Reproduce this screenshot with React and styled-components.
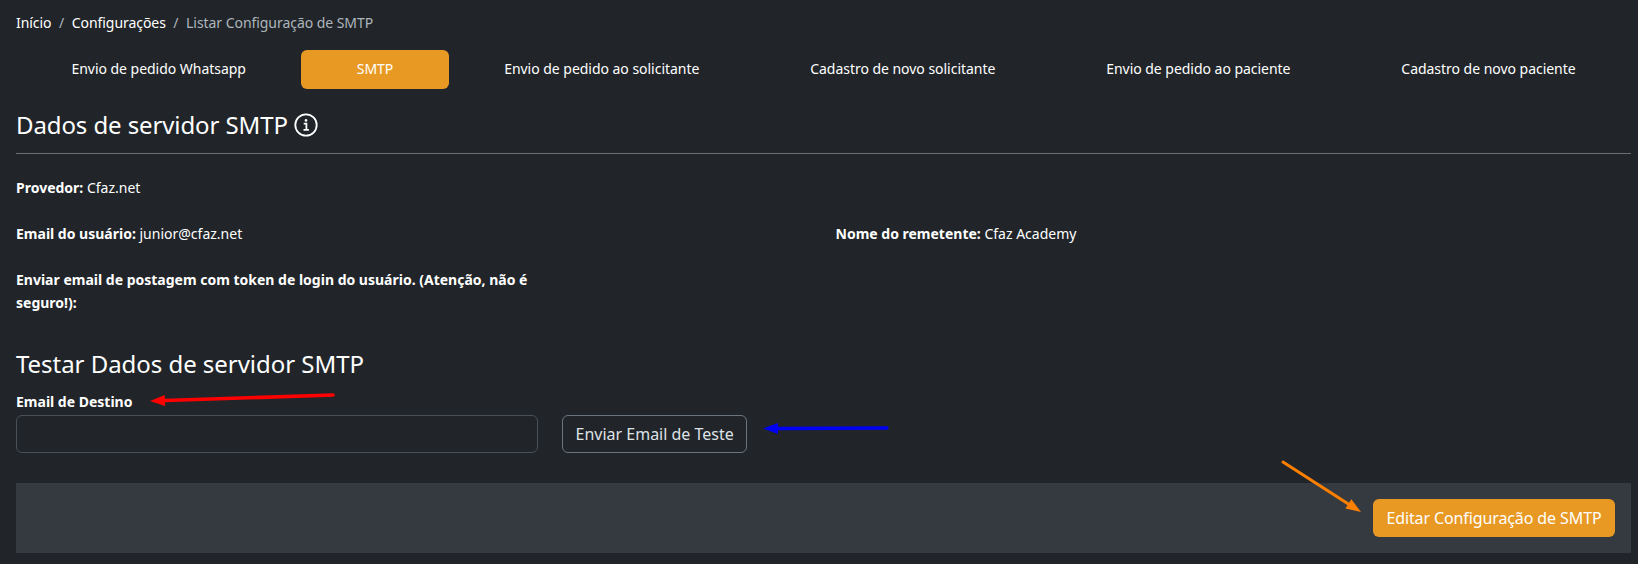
import React from 'react'
import styled, { createGlobalStyle } from 'styled-components'

const GlobalStyle = createGlobalStyle`
    * { box-sizing: border-box; }
    html, body { margin: 0; background: #212529; }
    body {
        font-family: 'Noto Sans', 'Open Sans', sans-serif;
        font-size: 14px;
        line-height: 21px;
        color: #fff;
    }
`

const tabs = [
    'Envio de pedido Whatsapp',
    'SMTP',
    'Envio de pedido ao solicitante',
    'Cadastro de novo solicitante',
    'Envio de pedido ao paciente',
    'Cadastro de novo paciente',
]

export default function App(){
    return(
        <Page>
            <GlobalStyle/>
            <Breadcrumb>
                <Crumb>Início</Crumb>
                <Slash>/</Slash>
                <Crumb>Configurações</Crumb>
                <Slash>/</Slash>
                <Crumb $current>Listar Configuração de SMTP</Crumb>
            </Breadcrumb>

            <Tabs>
                {tabs.map(t=>{
                    return <Tab key={t} $active={t==='SMTP'}>{t}</Tab>
                })}
            </Tabs>

            <SectionTitle>
                Dados de servidor SMTP
                <InfoIcon/>
            </SectionTitle>
            <Divider/>

            <InfoGrid>
                <Info><b>Provedor:</b> Cfaz.net</Info>
                <span/>
                <Info><b>Email do usuário:</b> junior@cfaz.net</Info>
                <Info><b>Nome do remetente:</b> Cfaz Academy</Info>
                <LongInfo><b>Enviar email de postagem com token de login do usuário. (Atenção, não é seguro!):</b></LongInfo>
            </InfoGrid>

            <TestTitle>Testar Dados de servidor SMTP</TestTitle>
            <Label htmlFor='destino'>Email de Destino</Label>
            <TestRow>
                <EmailInput id='destino' type='email'/>
                <OutlineButton>Enviar Email de Teste</OutlineButton>
            </TestRow>

            <Footer>
                <EditButton>Editar Configuração de SMTP</EditButton>
            </Footer>

            <Arrows/>
        </Page>
    )
}

function InfoIcon(){
    return(
        <svg width='24' height='24' viewBox='0 0 24 24' fill='none' stroke='#fff' style={{marginLeft:6,flexShrink:0}}>
            <circle cx='12' cy='12' r='10.7' strokeWidth='1.8'/>
            <path d='M9.7 10.6h2.7v6.1M9.5 16.9h5.4' strokeWidth='1.8'/>
            <circle cx='12' cy='7.4' r='1.3' fill='#fff' stroke='none'/>
        </svg>
    )
}

// setas desenhadas por cima da tela
function Arrows(){
    return(
        <ArrowLayer viewBox='0 0 1638 564'>
            <Arrow color='#fe0000' x1={333} y1={395} x2={150} y2={401} width={3.6}/>
            <Arrow color='#0000f5' x1={887} y1={428} x2={763} y2={428.6} width={3.4}/>
            <Arrow color='#ff7f00' x1={1283} y1={462} x2={1361} y2={512} width={3}/>
        </ArrowLayer>
    )
}

function Arrow({color,x1,y1,x2,y2,width}){
    const len = Math.hypot(x2-x1,y2-y1)
    const ux = (x2-x1)/len
    const uy = (y2-y1)/len
    const bx = x2-ux*15
    const by = y2-uy*15
    const head = `${x2},${y2} ${bx-uy*5.5},${by+ux*5.5} ${bx+uy*5.5},${by-ux*5.5}`
    return(
        <g>
            <line x1={x1} y1={y1} x2={bx} y2={by} stroke={color} strokeWidth={width} strokeLinecap='round'/>
            <polygon points={head} fill={color}/>
        </g>
    )
}

const Page = styled.div`
    position: relative;
    width: 1638px;
    height: 564px;
    padding: 12px 7px 0 16px;
    overflow: hidden;
    background: #212529;
`

const Breadcrumb = styled.nav`
    display: flex;
    align-items: center;
    height: 21px;
    letter-spacing: -0.05px;
`

const Crumb = styled.span`
    color: ${p=>p.$current?'#adb5bd':'#fff'};
`

const Slash = styled.span`
    color: #adb5bd;
    padding: 0 7.5px;
`

const Tabs = styled.div`
    display: flex;
    margin-top: 17px;
`

const Tab = styled.button`
    flex: 1 1 auto;
    height: 39px;
    padding: 0 18px 2px;
    border: 0;
    border-radius: 6px;
    font: inherit;
    letter-spacing: -0.03px;
    color: #fff;
    background: ${p=>p.$active?'#e89924':'transparent'};
`

const SectionTitle = styled.h2`
    display: flex;
    align-items: center;
    height: 36px;
    margin: 18px 0 0;
    font-size: 24px;
    font-weight: 400;
    line-height: 36px;
    letter-spacing: -0.1px;
`

const Divider = styled.hr`
    margin: 10px 0 0;
    border: 0;
    border-top: 1px solid #6c7075;
`

const InfoGrid = styled.div`
    display: grid;
    grid-template-columns: 819.5px 1fr;
    row-gap: 25px;
    margin-top: 23px;
`

const Info = styled.p`
    margin: 0;
    b { font-weight: 700; }
`

const LongInfo = styled(Info)`
    width: 522px;
    margin-top: -1px;
    line-height: 23px;
    grid-column: 1 / 3;
`

const TestTitle = styled.h3`
    margin: 32px 0 0;
    font-size: 24px;
    font-weight: 400;
    line-height: 36px;
    letter-spacing: -0.04px;
`

const Label = styled.label`
    display: block;
    margin-top: 10px;
    font-size: 14px;
    font-weight: 700;
    line-height: 20px;
`

const TestRow = styled.div`
    display: flex;
    gap: 24px;
    margin-top: 3px;
`

const EmailInput = styled.input`
    width: 522px;
    height: 38px;
    border: 1px solid #495057;
    border-radius: 6px;
    background: #212529;
`

const OutlineButton = styled.button`
    height: 38px;
    padding: 0 12.5px;
    border: 1px solid #6c757d;
    border-radius: 6px;
    background: transparent;
    color: #dee2e6;
    font: inherit;
    font-size: 16px;
`

const Footer = styled.div`
    display: flex;
    justify-content: flex-end;
    align-items: center;
    height: 70px;
    margin-top: 30px;
    padding-right: 16px;
    background: #343a40;
`

const EditButton = styled.button`
    height: 38px;
    padding: 0 13.5px;
    border: 0;
    border-radius: 6px;
    background: #e89924;
    color: #fff;
    font: inherit;
    font-size: 16px;
    letter-spacing: -0.11px;
`

const ArrowLayer = styled.svg`
    position: absolute;
    top: 0;
    left: 0;
    width: 1638px;
    height: 564px;
    pointer-events: none;
`
